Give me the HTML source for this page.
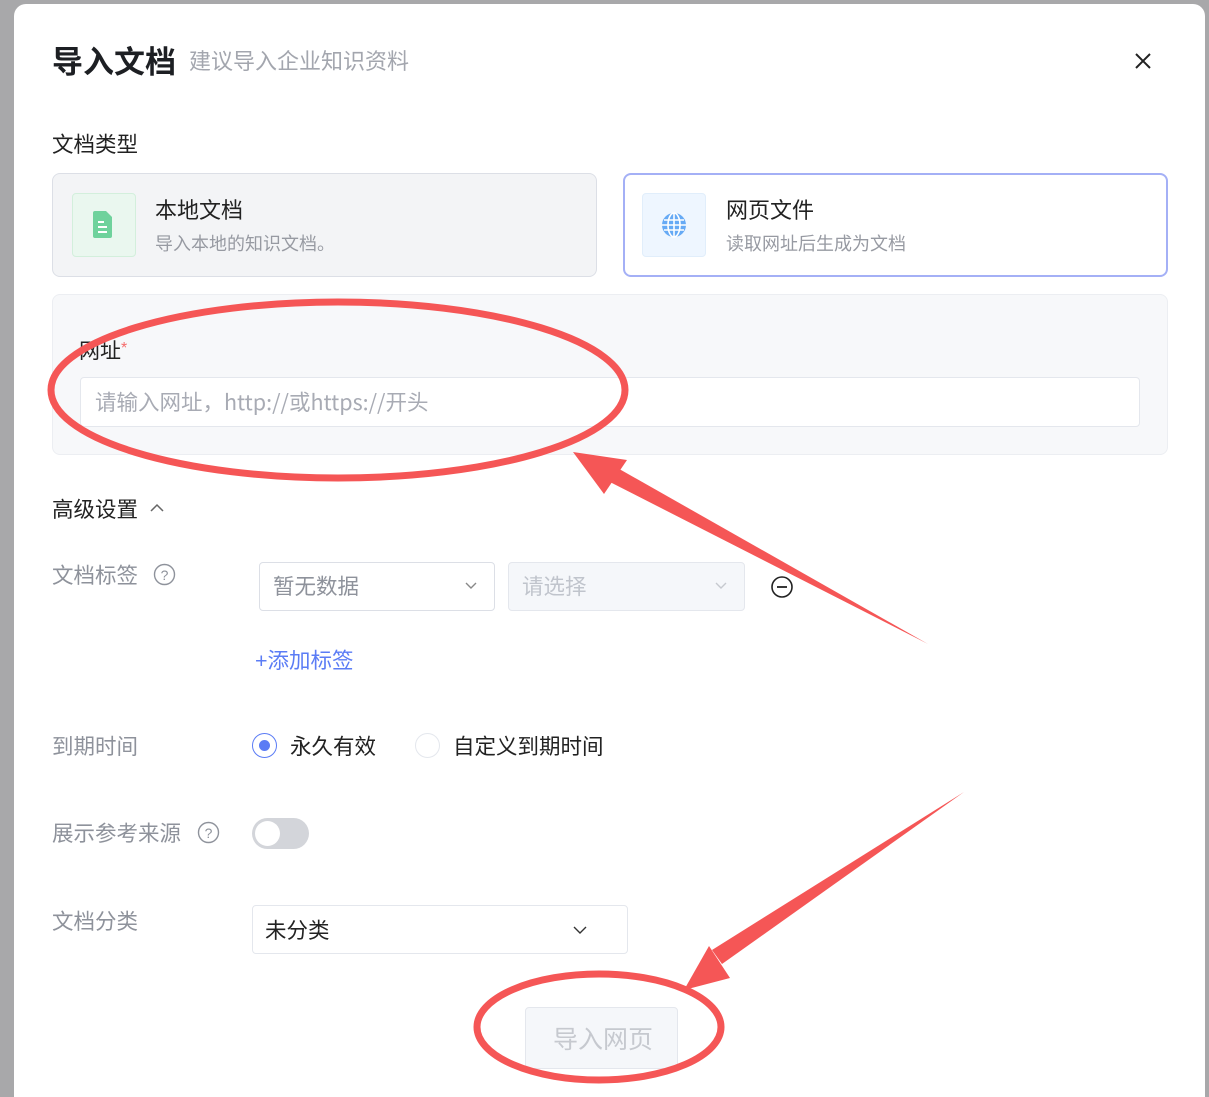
<!DOCTYPE html>
<html><head><meta charset="utf-8"><style>
*{margin:0;padding:0;box-sizing:border-box}
html,body{width:1209px;height:1097px;overflow:hidden}
body{background:#a8a8aa;position:relative;font-family:"Liberation Sans","Noto Sans CJK SC",sans-serif}
.dlg{position:absolute;left:14px;top:4px;width:1191px;height:1093px;background:#fff;border-radius:12px 12px 0 0}
.a{position:absolute;white-space:nowrap;line-height:1}
.gray{color:#8e929b}
.box{position:absolute;border:1px solid #dcdfe6;border-radius:4px;background:#fff}
</style></head><body>
<div class="dlg"></div>
<div class="a" style="left:52px;top:47px;font-size:31px;font-weight:bold;color:#1d1f23">导入文档</div>
<div class="a" style="left:189px;top:51px;font-size:22px;color:#a3a6ae">建议导入企业知识资料</div>
<svg class="a" style="left:1133px;top:51px" width="20" height="20" viewBox="0 0 20 20"><path d="M3 3L17 17M17 3L3 17" stroke="#222" stroke-width="2"/></svg>
<div class="a" style="left:52px;top:135px;font-size:21.5px;color:#222">文档类型</div>

<div style="position:absolute;left:52px;top:173px;width:545px;height:104px;background:#f3f4f6;border:1px solid #dcdfe6;border-radius:8px"></div>
<div style="position:absolute;left:72px;top:193px;width:64px;height:64px;background:#eaf7ef;border:1px solid #d3efdc;border-radius:4px"></div>
<svg class="a" style="left:93px;top:211px" width="20" height="27" viewBox="0 0 20 27"><path d="M2 0H13L19 6V25Q19 27 17 27H2Q0 27 0 25V2Q0 0 2 0Z" fill="#6fd29c"/><path d="M5 11H11M5 16H14M5 21H14" stroke="#fff" stroke-width="2"/></svg>
<div class="a" style="left:155px;top:200px;font-size:22px;color:#222">本地文档</div>
<div class="a" style="left:155px;top:235px;font-size:18px;color:#979aa2">导入本地的知识文档。</div>

<div style="position:absolute;left:623px;top:173px;width:545px;height:104px;background:#fff;border:2px solid #a4b0f6;border-radius:8px"></div>
<div style="position:absolute;left:642px;top:193px;width:64px;height:64px;background:#eef6ff;border:1px solid #e1eefb;border-radius:4px"></div>
<svg class="a" style="left:660px;top:211px" width="28" height="28" viewBox="0 0 28 28"><circle cx="14" cy="14" r="12" fill="#66aaf5"/><path d="M2 14H26M4 9H24M4 19H24M14 2V26" stroke="#fff" stroke-width="1.6" fill="none"/><ellipse cx="14" cy="14" rx="6" ry="12" stroke="#fff" stroke-width="1.6" fill="none"/></svg>
<div class="a" style="left:726px;top:200px;font-size:22px;color:#222">网页文件</div>
<div class="a" style="left:726px;top:235px;font-size:18px;color:#979aa2">读取网址后生成为文档</div>

<div style="position:absolute;left:52px;top:294px;width:1116px;height:161px;background:#f7f8fa;border:1px solid #eceef2;border-radius:8px"></div>
<div class="a" style="left:79px;top:341px;font-size:21px;color:#222">网址<span style="color:#f56c6c;font-size:16px;vertical-align:top">*</span></div>
<div class="box" style="left:80px;top:377px;width:1060px;height:50px;border-color:#e4e7ed"></div>
<div class="a" style="left:95px;top:390px;font-size:21.5px;color:#a8abb4;font-family:'Noto Sans CJK SC',sans-serif;line-height:24px">请输入网址，http://或https://开头</div>

<div class="a" style="left:52px;top:500px;font-size:21.5px;color:#222">高级设置</div>
<svg class="a" style="left:149px;top:502px" width="16" height="12" viewBox="0 0 16 12"><path d="M2 9L8 3L14 9" stroke="#666" stroke-width="1.5" fill="none"/></svg>

<div class="a gray" style="left:52px;top:566px;font-size:21.5px">文档标签</div>
<svg class="a" style="left:153px;top:563px" width="23" height="23" viewBox="0 0 23 23"><circle cx="11.5" cy="11.5" r="10" stroke="#8e929b" stroke-width="1.4" fill="none"/><text x="11.5" y="17" font-size="14" fill="#8e929b" text-anchor="middle" font-family="Liberation Sans">?</text></svg>
<div class="box" style="left:259px;top:562px;width:236px;height:49px"></div>
<div class="a" style="left:273px;top:577px;font-size:21.5px;color:#8e929b">暂无数据</div>
<svg class="a" style="left:464px;top:580px" width="14" height="10" viewBox="0 0 14 10"><path d="M2 3L7 8L12 3" stroke="#888" stroke-width="1.4" fill="none"/></svg>
<div class="box" style="left:508px;top:562px;width:237px;height:49px;background:#f5f7fa;border-color:#e4e7ed"></div>
<div class="a" style="left:522px;top:577px;font-size:21.5px;color:#c0c4cc">请选择</div>
<svg class="a" style="left:714px;top:580px" width="14" height="10" viewBox="0 0 14 10"><path d="M2 3L7 8L12 3" stroke="#c6c9cf" stroke-width="1.4" fill="none"/></svg>
<svg class="a" style="left:770px;top:575px" width="24" height="24" viewBox="0 0 24 24"><circle cx="12" cy="12" r="10" stroke="#222" stroke-width="1.6" fill="none"/><path d="M7 12H17" stroke="#222" stroke-width="1.8"/></svg>
<div class="a" style="left:255px;top:651px;font-size:21.5px;color:#5b7cf5">+添加标签</div>

<div class="a gray" style="left:52px;top:737px;font-size:21.5px">到期时间</div>
<div style="position:absolute;left:252px;top:733px;width:25px;height:25px;border:1.5px solid #5b7cf5;border-radius:50%;background:#fff"></div>
<div style="position:absolute;left:259px;top:740px;width:11px;height:11px;border-radius:50%;background:#5b7cf5"></div>
<div class="a" style="left:290px;top:737px;font-size:21.5px;color:#222">永久有效</div>
<div style="position:absolute;left:415px;top:733px;width:25px;height:25px;border:1px solid #e4e7ed;border-radius:50%;background:#fff"></div>
<div class="a" style="left:453px;top:737px;font-size:21.5px;color:#222">自定义到期时间</div>

<div class="a gray" style="left:52px;top:824px;font-size:21.5px">展示参考来源</div>
<svg class="a" style="left:197px;top:821px" width="23" height="23" viewBox="0 0 23 23"><circle cx="11.5" cy="11.5" r="10" stroke="#8e929b" stroke-width="1.4" fill="none"/><text x="11.5" y="17" font-size="14" fill="#8e929b" text-anchor="middle" font-family="Liberation Sans">?</text></svg>
<div style="position:absolute;left:252px;top:818px;width:57px;height:31px;border-radius:16px;background:#d3d5da"></div>
<div style="position:absolute;left:255px;top:821px;width:25px;height:25px;border-radius:50%;background:#fff"></div>

<div class="a gray" style="left:52px;top:912px;font-size:21.5px">文档分类</div>
<div class="box" style="left:252px;top:905px;width:376px;height:49px;border-color:#e4e7ed"></div>
<div class="a" style="left:265px;top:921px;font-size:21.5px;color:#222">未分类</div>
<svg class="a" style="left:572px;top:924px" width="16" height="11" viewBox="0 0 16 11"><path d="M2 3L8 9L14 3" stroke="#333" stroke-width="1.4" fill="none"/></svg>

<div style="position:absolute;left:525px;top:1007px;width:153px;height:62px;background:#f5f7fa;border:1px solid #e4e7ed;border-radius:4px"></div>
<div class="a" style="left:553px;top:1028px;font-size:25px;color:#c6c9cf">导入网页</div>

<svg style="position:absolute;left:0;top:0" width="1209" height="1097" viewBox="0 0 1209 1097">
<g fill="none" stroke="#f55656" stroke-width="7">
<ellipse cx="338" cy="390" rx="287" ry="88"/>
<ellipse cx="599" cy="1027" rx="122" ry="53"/>
</g>
<g fill="#f55656">
<polygon points="928,644 614,466 606,480"/>
<polygon points="573,452 627,460 604,494"/>
<polygon points="964,792 722,964 712,950"/>
<polygon points="684,990 709,946 730,978"/>
</g>
</svg>
</body></html>
